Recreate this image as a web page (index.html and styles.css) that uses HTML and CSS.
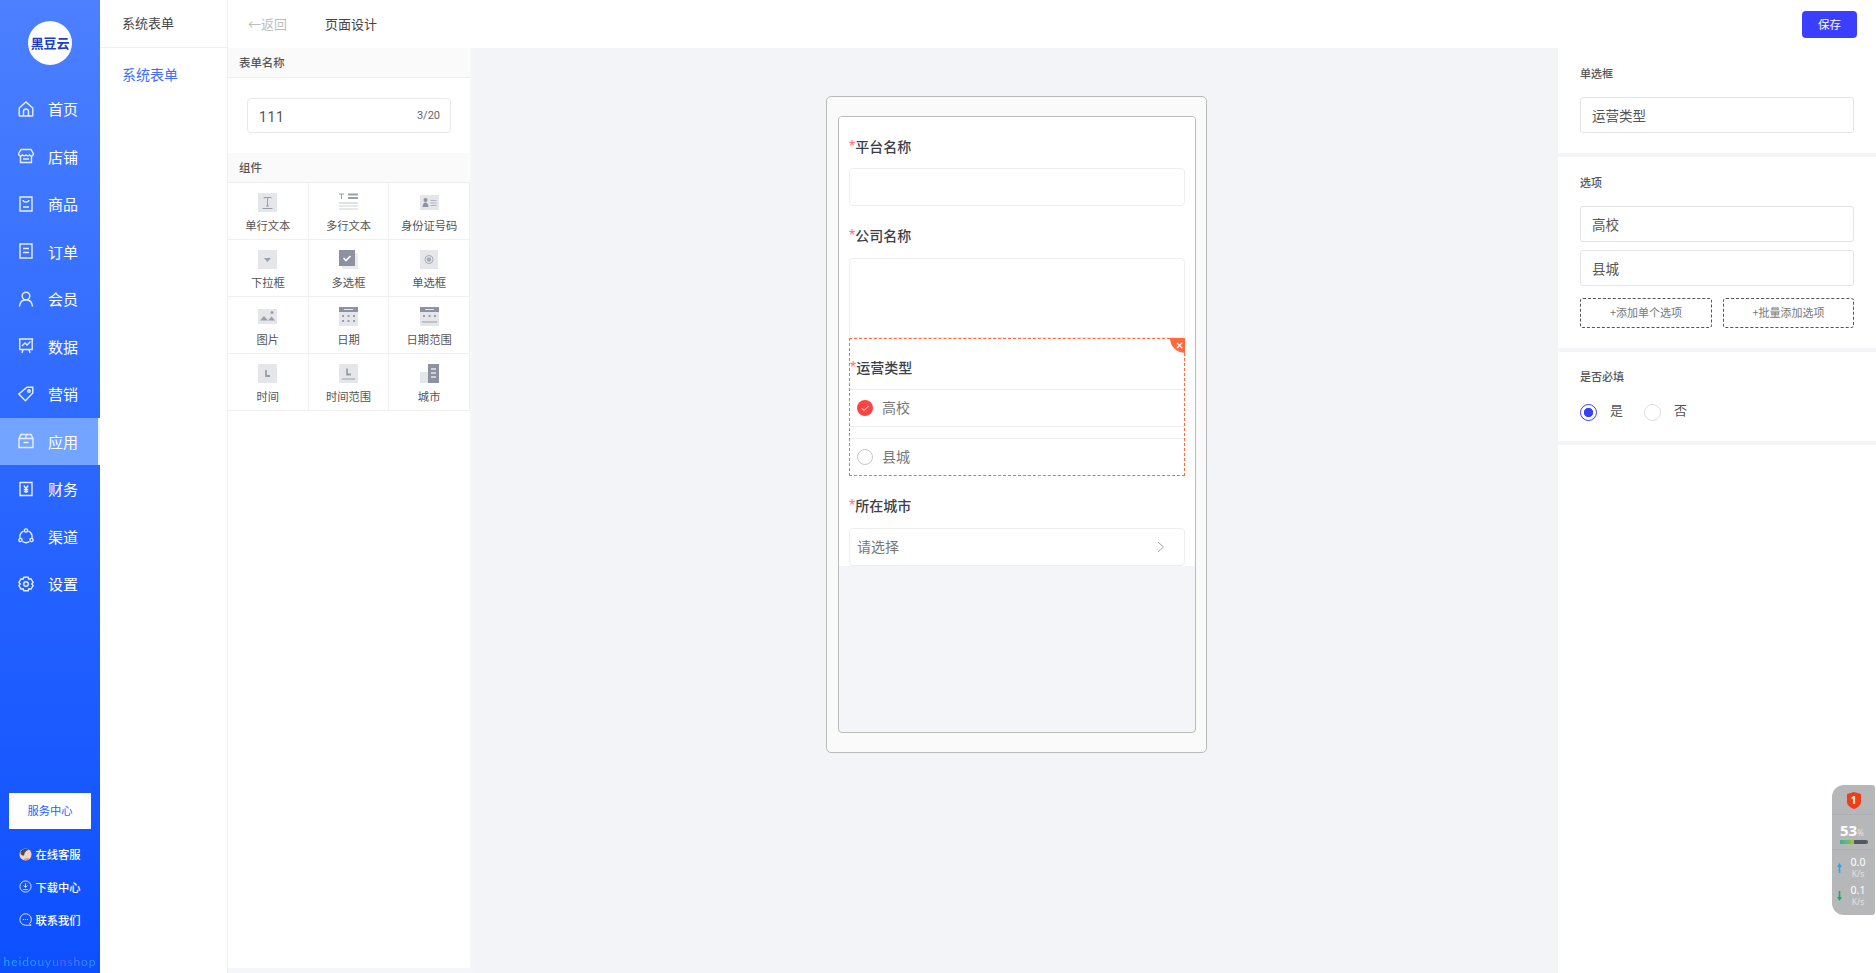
FILE: index.html
```html
<!DOCTYPE html>
<html lang="zh-CN">
<head>
<meta charset="utf-8">
<title>页面设计</title>
<link rel="stylesheet" href="styles.css">
</head>
<body>
<div class="app">
  <aside class="side">
    <div class="logo-wrap"><div class="logo">黑豆云</div></div>
    <nav class="nav">
      <a class="nav-item"><svg class="ni" viewBox="0 0 16 16"><path d="M1.2 7 8 1l6.8 6v7.2a.8.8 0 0 1-.8.8H2a.8.8 0 0 1-.8-.8z"/><path d="M5.5 15v-4.5a2.5 2.5 0 0 1 5 0V15"/></svg><span>首页</span></a>
      <a class="nav-item"><svg class="ni" viewBox="0 0 16 16"><path d="M3 1.5h10l2.3 4a2 2 0 0 1-3.7 1.4A2.6 2.6 0 0 1 8 7a2.6 2.6 0 0 1-3.6-.1A2 2 0 0 1 .7 5.500z"/><path d="M2.500 8v6.500h11V8M5 11h6"/></svg><span>店铺</span></a>
      <a class="nav-item"><svg class="ni" viewBox="0 0 16 16"><path d="M2 1h12v14H2zM5 4c.3 2.600 5.700 2.600 6 0M5 11h6"/></svg><span>商品</span></a>
      <a class="nav-item"><svg class="ni" viewBox="0 0 16 16"><path d="M2 1h12v14H2zM5 5.500h6M5 9.500h6"/></svg><span>订单</span></a>
      <a class="nav-item"><svg class="ni" viewBox="0 0 16 16"><circle cx="8" cy="5" r="3.800"/><path d="M1.500 15.500c.4-4 3-6.700 6.500-6.700s6.100 2.700 6.500 6.700"/></svg><span>会员</span></a>
      <a class="nav-item"><svg class="ni" viewBox="0 0 16 16"><path d="M.8 1h14.400M1.800 1v10.500h12.400V1M4 8l3-3 2 2 3.500-3.500M5 11.500 4 15M11 11.500l1 3.500"/></svg><span>数据</span></a>
      <a class="nav-item"><svg class="ni" viewBox="0 0 16 16"><path d="M9 1.200h5.800V7L7.400 14.800.8 8z"/><circle cx="11" cy="5" r="1.300"/></svg><span>营销</span></a>
      <a class="nav-item active"><svg class="ni" viewBox="0 0 16 16"><path d="M3 1.500h10l2 4v9H1v-9zM1 5.500h14M8 1.500v4M5.500 9.500h5"/></svg><span>应用</span></a>
      <a class="nav-item"><svg class="ni" viewBox="0 0 16 16"><path d="M2 1.500h12v13H2zM5.800 4.500 8 7.500l2.200-3M8 7.500v4.500M5.800 8.500h4.400M5.800 10.500h4.400"/></svg><span>财务</span></a>
      <a class="nav-item"><svg class="ni" viewBox="0 0 16 16"><circle cx="8" cy="2.500" r="1.600"/><circle cx="2.500" cy="12" r="1.600"/><circle cx="13.500" cy="12" r="1.600"/><path d="M5.700 3.200A6.200 6.200 0 0 0 2 9.800M10.300 3.200A6.200 6.200 0 0 1 14 9.800M4.500 13.500a6.200 6.200 0 0 0 7 0"/></svg><span>渠道</span></a>
      <a class="nav-item"><svg class="ni" viewBox="0 0 16 16"><path d="M5.800 1.200h4.400l.7 1.900 2-.4 2.200 3.800-1.400 1.500 1.400 1.500-2.200 3.800-2-.4-.7 1.900H5.800l-.7-1.900-2 .4L.9 9.500 2.300 8 .9 6.500l2.200-3.800 2 .4z"/><circle cx="8" cy="8" r="2.300"/></svg><span>设置</span></a>
    </nav>
    <div class="side-foot">
      <button class="svc">服务中心</button>
      <a class="foot-link"><svg class="fi" viewBox="0 0 14 14"><circle cx="7" cy="7" r="6.500" fill="#f4d3c0"/><path d="M1.500 5C2.500 1 8 -.5 10.500 2 8 3 6 4 5.500 8 4 8.500 2 7.500 1.500 5z" fill="#4b4a52"/><path d="M5 13c1-2 4-2.500 5.500-2l-1 2.300z" fill="#e9967a"/></svg><span>在线客服</span></a>
      <a class="foot-link"><svg class="fi stroke" viewBox="0 0 14 14"><circle cx="7" cy="7" r="6"/><path d="M7 3.500v4M5 6l2 2 2-2M4.500 10.300h5"/></svg><span>下载中心</span></a>
      <a class="foot-link"><svg class="fi stroke" viewBox="0 0 14 14"><path d="M13 13.500 11.300 11.600A6.200 6.200 0 1 0 7 13.200h6"/><path d="M4.300 7h1M6.500 7h1M8.700 7h1"/></svg><span>联系我们</span></a>
      <div class="brand">heidouyunshop</div>
    </div>
  </aside>

  <aside class="sub">
    <div class="sub-head">系统表单</div>
    <div class="sub-item">系统表单</div>
  </aside>

  <div class="main">
    <header class="top">
      <span class="back">←返回</span>
      <span class="crumb">页面设计</span>
      <button class="save">保存</button>
    </header>
    <div class="work">
      <div class="left-wrap">
        <section class="left">
          <div class="panel-head">表单名称</div>
          <div class="name-area">
            <div class="name-box"><span class="name-val">111</span><span class="name-count">3/20</span></div>
          </div>
          <div class="panel-head">组件</div>
          <div class="grid">
            <div class="cell"><svg class="ci" viewBox="0 0 19 19"><rect width="19" height="19" fill="#e4e6ea"/><path d="M6 5.500V4.500h7v1M9.500 4.500V13M8 13h3M4.500 15.500h10" class="cs"/></svg><span>单行文本</span></div>
            <div class="cell"><svg class="ci" viewBox="0 0 19 19"><path d="M0 1h5M2.500 1v5" class="cs"/><path d="M9 1.500h10M9 5h10" stroke="#9a9eaa" stroke-width="1.800" fill="none"/><path d="M0 10h19" stroke="#bfc2ca" fill="none"/><path d="M0 13h19M0 16h19" stroke="#dfe1e6" stroke-width="1.500" fill="none"/></svg><span>多行文本</span></div>
            <div class="cell"><svg class="ci" viewBox="0 0 19 19"><rect y="2" width="19" height="15" fill="#e4e6ea"/><circle cx="5.500" cy="7" r="2" fill="#8e92a0"/><path d="M2.500 14c0-6 6-6 6 0z" fill="#8e92a0"/><path d="M10.500 7.500h6M10.500 10h6M10.500 12.500h6" stroke="#b0b3bd" fill="none"/></svg><span>身份证号码</span></div>
            <div class="cell"><svg class="ci" viewBox="0 0 19 19"><rect width="19" height="19" fill="#e4e6ea"/><path d="M6 8h7l-3.500 4z" fill="#9a9eaa"/></svg><span>下拉框</span></div>
            <div class="cell"><svg class="ci" viewBox="0 0 19 19"><rect x="3" y="3" width="16" height="16" fill="#e9ebee"/><rect width="16" height="16" fill="#8e92a0"/><path d="M4.500 8 7 10.500 11.500 6" stroke="#fff" stroke-width="1.600" fill="none"/></svg><span>多选框</span></div>
            <div class="cell"><svg class="ci" viewBox="0 0 19 19"><rect width="18" height="19" fill="#e4e6ea"/><circle cx="9" cy="9.500" r="4" fill="none" stroke="#a7aab5"/><circle cx="9" cy="9.500" r="2.200" fill="#a7aab5"/></svg><span>单选框</span></div>
            <div class="cell"><svg class="ci" viewBox="0 0 19 19"><rect y="2" width="19" height="15" fill="#e4e6ea"/><circle cx="14" cy="5.500" r="1.500" fill="#9a9eaa"/><path d="M2 13.500 6 9l4 4.500zM10 13.500 13.500 9.500l3.500 4z" fill="#9a9eaa"/></svg><span>图片</span></div>
            <div class="cell"><svg class="ci" viewBox="0 0 19 19"><rect width="19" height="19" fill="#e4e6ea"/><rect width="19" height="5" fill="#8e92a0"/><path d="M5 2.500h9" stroke="#e4e6ea"/><path d="M3 9h2M8.500 9h2M14 9h2M3 14h2M8.500 14h2M14 14h2" stroke="#9a9eaa" stroke-width="2"/></svg><span>日期</span></div>
            <div class="cell"><svg class="ci" viewBox="0 0 19 19"><rect width="19" height="19" fill="#e4e6ea"/><rect width="19" height="5" fill="#8e92a0"/><path d="M5 2.500h9" stroke="#e4e6ea"/><path d="M3 9h2M8.500 9h2M14 9h2" stroke="#9a9eaa" stroke-width="2"/><path d="M2 15h15" stroke="#9a9eaa"/></svg><span>日期范围</span></div>
            <div class="cell"><svg class="ci" viewBox="0 0 19 19"><rect width="19" height="19" fill="#e4e6ea"/><path d="M8 6v6h4" stroke="#9a9eaa" stroke-width="1.800" fill="none"/></svg><span>时间</span></div>
            <div class="cell"><svg class="ci" viewBox="0 0 19 19"><rect width="19" height="19" fill="#e4e6ea"/><path d="M8 4.500v6h4" stroke="#9a9eaa" stroke-width="1.800" fill="none"/><path d="M3 15h13" stroke="#9a9eaa"/></svg><span>时间范围</span></div>
            <div class="cell"><svg class="ci" viewBox="0 0 19 19"><rect y="8" width="9" height="11" fill="#e4e6ea"/><rect x="8" width="11" height="19" fill="#8e92a0"/><path d="M11 5h5M11 9h5M11 13h5" stroke="#e4e6ea" stroke-width="1.300"/></svg><span>城市</span></div>
          </div>
        </section>
      </div>

      <main class="canvas">
        <div class="phone">
          <div class="screen">
            <div class="form">
              <div class="f-label"><i>*</i>平台名称</div>
              <div class="f-input"></div>
              <div class="f-label second"><i>*</i>公司名称</div>
              <div class="f-area"></div>
              <div class="selected">
                <span class="del"><svg viewBox="0 0 8 8"><path d="m1 1 6 6M7 1 1 7"/></svg></span>
                <div class="f-label flush"><i>*</i>运营类型</div>
                <div class="opt first"><span class="check"><svg viewBox="0 0 16 16"><path d="m4.500 8 2.500 2.500 4.500-4.500"/></svg></span><span class="opt-txt">高校</span></div>
                <div class="opt last"><span class="uncheck"></span><span class="opt-txt">县城</span></div>
              </div>
              <div class="f-label second"><i>*</i>所在城市</div>
              <div class="f-select"><span class="opt-txt">请选择</span><svg class="chev" viewBox="0 0 8 12"><path d="m1 1 5.500 5L1 11"/></svg></div>
            </div>
          </div>
        </div>
      </main>

      <section class="right">
        <div class="r-sec">
          <div class="r-label">单选框</div>
          <div class="r-input">运营类型</div>
        </div>
        <div class="r-sec">
          <div class="r-label">选项</div>
          <div class="r-input">高校</div>
          <div class="r-input next">县城</div>
          <div class="r-btns"><button class="dash wide">+添加单个选项</button><button class="dash">+批量添加选项</button></div>
        </div>
        <div class="r-sec req">
          <div class="r-label">是否必填</div>
          <div class="radios">
            <span class="radio on"></span><span class="r-txt">是</span>
            <span class="radio"></span><span class="r-txt">否</span>
          </div>
        </div>
      </section>
    </div>
  </div>

  <div class="monitor">
    <div class="m-shield"><svg viewBox="0 0 14 17"><path d="M7 0l7 2v8c0 3-3 5.500-7 7-4-1.500-7-4-7-7V2z" fill="#ee3f1c"/></svg><b>1</b></div>
    <div class="m-cpu"><div class="m-pct"><b>53</b><small>%</small></div><div class="m-bar"><span></span></div></div>
    <div class="m-net">
      <div class="m-row"><svg class="arr" viewBox="0 0 5 10"><path d="M2.500 0 5 4H3.300v6H1.700V4H0z" fill="#25a6ee"/></svg><div class="m-val">0.0<small>K/s</small></div></div>
      <div class="m-row"><svg class="arr" viewBox="0 0 5 10"><path d="M2.500 10 5 6H3.300V0H1.700v6H0z" fill="#0fae62"/></svg><div class="m-val">0.1<small>K/s</small></div></div>
    </div>
  </div>
</div>
</body>
</html>
```
FILE: styles.css
```css
* { box-sizing: border-box; }
html, body { margin: 0; height: 100%; overflow: hidden; }
body { font-family: "Noto Sans CJK SC", "Noto Sans", sans-serif; color: #444; background: #fff; }
button { font-family: inherit; cursor: pointer; }

.app { position: relative; display: flex; height: 973px; width: 1876px; overflow: hidden; }

/* primary sidebar */
.side { width: 100px; flex: none; display: flex; flex-direction: column; background: linear-gradient(180deg, #4c80ff 0%, #2a66ff 50%, #0c4fff 100%); color: #fff; }
.logo-wrap { height: 85px; flex: none; display: flex; align-items: flex-start; justify-content: center; padding-top: 21px; }
.logo { width: 44px; height: 44px; border-radius: 50%; background: #fff; color: #1b3fc4; font-size: 13px; font-weight: 700; line-height: 43px; text-align: center; white-space: nowrap; letter-spacing: -.2px; }
.nav { display: flex; flex-direction: column; }
.nav-item { height: 47.500px; display: flex; align-items: center; gap: 14px; padding-left: 18px; font-size: 15px; color: #fff; }
.nav-item.active { background: #73a4ff; border-right: 2px solid #e9f0ff; }
.ni { width: 16px; height: 16px; flex: none; fill: none; stroke: #e6eeff; stroke-width: 1.400; }
.side-foot { margin-top: auto; display: flex; flex-direction: column; align-items: center; }
.svc { width: 82px; height: 36px; background: #fff; border: 0; color: #1f62ff; font-size: 11.300px; padding: 0 0 2px; }
.foot-link { height: 32.700px; display: flex; align-items: center; gap: 3px; font-size: 11.300px; color: #fff; font-weight: 500; }
.side-foot .svc + .foot-link { margin-top: 8.500px; }
.fi { width: 13px; height: 13px; flex: none; }
.fi.stroke { fill: none; stroke: #e6eeff; stroke-width: 1; }
.brand { margin: 18px 0 3px; height: 16px; line-height: 16px; font-family: Lato, sans-serif; font-size: 12px; letter-spacing: .9px; white-space: nowrap; background: linear-gradient(90deg, #22b0ee, #3488ff 50%, #6a5cff 62%, #2aa0f4); -webkit-background-clip: text; background-clip: text; color: transparent; }

/* secondary sidebar */
.sub { width: 128px; flex: none; background: #fff; border-right: 1px solid #eee; }
.sub-head { height: 48px; line-height: 46px; padding-left: 22px; font-size: 13px; color: #444; border-bottom: 1px solid #f0f0f0; }
.sub-item { padding-left: 22px; margin-top: 16px; line-height: 20px; font-size: 14px; color: #3f6bff; }

.main { flex: 1; min-width: 0; display: flex; flex-direction: column; }
.top { height: 48px; flex: none; display: flex; align-items: center; padding: 0 19px 0 20px; background: #fff; font-size: 13px; }
.back { color: #bdbdbd; width: 77px; padding-bottom: 2px; }
.crumb { color: #444; padding-bottom: 2px; }
.save { margin-left: auto; width: 55px; height: 27px; border: 0; border-radius: 4px; background: #3a3fff; color: #fff; font-size: 11.500px; padding: 0 0 1px; }

.work { flex: 1; display: flex; min-height: 0; }
.left-wrap { width: 247px; flex: none; background: #f5f6fa; padding: 0 5px 5px 0; }
.left { height: 100%; background: #fff; }
.panel-head { height: 30px; line-height: 29px; padding-left: 11px; background: #fafafa; border-bottom: 1px solid #eee; font-size: 11.400px; font-weight: 500; color: #555; }
.name-area { height: 75px; padding: 20px 19px; }
.name-box { height: 35px; display: flex; align-items: center; justify-content: space-between; padding: 0 10px 0 11px; border: 1px solid #e8e8e8; border-radius: 4px; }
.name-val { font-family: Roboto, sans-serif; font-size: 14px; letter-spacing: .6px; color: #555; padding-top: 2px; }
.name-count { font-family: Roboto, sans-serif; font-size: 11px; color: #666; }
.grid { display: grid; grid-template-columns: repeat(3, 1fr); }
.cell { height: 57px; display: flex; flex-direction: column; align-items: center; padding-top: 10px; border-right: 1px solid #f0f0f0; border-bottom: 1px solid #f0f0f0; font-size: 11.300px; color: #555; }
.cell span { margin-top: 4px; line-height: 18px; white-space: nowrap; }
.ci { width: 19px; height: 19px; flex: none; }
.cs { fill: none; stroke: #9a9eaa; stroke-width: 1; }

/* phone preview */
.canvas { flex: 1; min-width: 0; background: #f2f4f8; padding-top: 48px; display: flex; justify-content: center; align-items: flex-start; }
.phone { width: 381px; height: 657px; padding: 19px 10px 19px 11px; background: #fafafa; border: 1px solid #bbb; border-radius: 5px; }
.screen { height: 100%; border: 1px solid #bbb; border-radius: 4px; background: #f4f5f8; overflow: hidden; }
.form { background: #fff; padding: 20px 10px 0 10px; }
.f-label { height: 20px; line-height: 18px; font-size: 14px; font-weight: 500; color: #3c3f48; }
.f-label i { font-family: "Liberation Sans", sans-serif; font-size: 16px; font-style: normal; font-weight: 400; line-height: 0; color: #ff7272; }
.f-label.second { margin-top: 20px; }
.f-input { height: 38px; margin-top: 11px; border: 1px solid #eee; border-radius: 4px; }
.f-area { height: 80px; margin-top: 12px; border: 1px solid #eee; border-radius: 4px; }
.selected { position: relative; height: 138px; padding-top: 19px; border: 1px dashed #ff6a3c; }
.del { position: absolute; top: -1px; right: -1px; width: 15px; height: 15px; background: #ff6a3c; border-bottom-left-radius: 15px; display: flex; align-items: center; justify-content: center; }
.del svg { width: 7px; height: 7px; margin: 0 0 1px 3px; fill: none; stroke: #fff; stroke-width: 1.500; }
.opt { display: flex; align-items: center; gap: 9px; padding-left: 7px; font-size: 14px; color: #777; border-top: 1px solid #eee; }
.opt.first { height: 38px; margin-top: 11px; border-bottom: 1px solid #eee; }
.opt.last { height: 37px; margin-top: 11px; }
.opt-txt { padding-bottom: 2px; }
.check { width: 16px; height: 16px; border-radius: 50%; background: #ff4343; display: block; }
.check svg { display: block; fill: none; stroke: #fff; stroke-width: 1; }
.uncheck { width: 16px; height: 16px; border-radius: 50%; border: 1px solid #c8c8c8; display: block; }
.f-select { height: 38px; margin-top: 12px; display: flex; align-items: center; justify-content: space-between; padding: 0 19px 0 7px; border: 1px solid #eee; border-radius: 4px; font-size: 14px; color: #777; }
.chev { width: 8px; height: 12px; fill: none; stroke: #aaa; stroke-width: 1; }

/* property panel */
.right { width: 318px; flex: none; background: #fff; display: flex; flex-direction: column; }
.r-sec { padding: 17px 22px 20px; border-bottom: 4px solid #f5f5f7; }
.r-sec.req { padding-top: 16px; }
.r-label { height: 16px; line-height: 16px; font-size: 11px; font-weight: 500; color: #555; }
.r-input { height: 36px; margin-top: 16px; padding-left: 11px; line-height: 34px; border: 1px solid #e4e4e4; border-radius: 3px; font-size: 13.500px; color: #555; }
.r-input.next { margin-top: 8px; }
.r-btns { display: flex; gap: 11px; margin-top: 12px; }
.dash { flex: 1; height: 30px; padding: 0 0 2px; background: #fff; border: 1px dashed #555; border-radius: 3px; font-size: 11px; color: #777; }
.dash.wide { flex: none; width: 132px; }
.radios { display: flex; align-items: center; height: 18px; margin-top: 19px; font-size: 13px; color: #555; }
.radio { width: 17px; height: 17px; border: 1px solid #ddd; border-radius: 50%; flex: none; display: block; }
.radio.on { border-color: #3a3fff; background: radial-gradient(circle, #3a3fff 0 4.300px, #fff 5px); }
.r-txt { margin: 0 21px 0 13px; padding-bottom: 6px; }

/* floating system monitor */
.monitor { position: absolute; top: 785px; right: 1px; width: 43px; height: 130px; background: #b6b7b9; border-radius: 12px 3px 3px 12px; color: #fff; font-family: "Noto Sans", sans-serif; display: flex; flex-direction: column; }
.m-shield { position: relative; height: 30px; display: flex; justify-content: center; padding-top: 7px; border-bottom: 1px solid #aeafb1; }
.m-shield svg { width: 14px; height: 17px; }
.m-shield b { position: absolute; top: 7px; left: 0; right: 0; text-align: center; font-size: 10px; line-height: 16px; color: #fff; }
.m-cpu { height: 35px; padding: 6px 7px 0 8px; border-bottom: 1px solid #aeafb1; }
.m-pct { height: 18px; line-height: 18px; }
.m-pct b { font-size: 15px; }
.m-pct small { font-size: 8px; color: #e4e4e4; }
.m-bar { height: 4px; margin-top: 1px; border-radius: 2px; background: #55565e; overflow: hidden; }
.m-bar span { display: block; width: 50%; height: 100%; background: linear-gradient(90deg, #2ab8b0, #7bc048 70%, #c2b93a); }
.m-net { display: flex; flex-direction: column; gap: 2px; padding: 5px 0 0 5px; }
.m-row { display: flex; align-items: center; gap: 3px; height: 26px; }
.arr { width: 5px; height: 10px; flex: none; }
.m-val { width: 26px; text-align: center; font-size: 10.500px; line-height: 12px; }
.m-val small { display: block; font-size: 8.500px; line-height: 12px; color: #e2e2e2; }
```
